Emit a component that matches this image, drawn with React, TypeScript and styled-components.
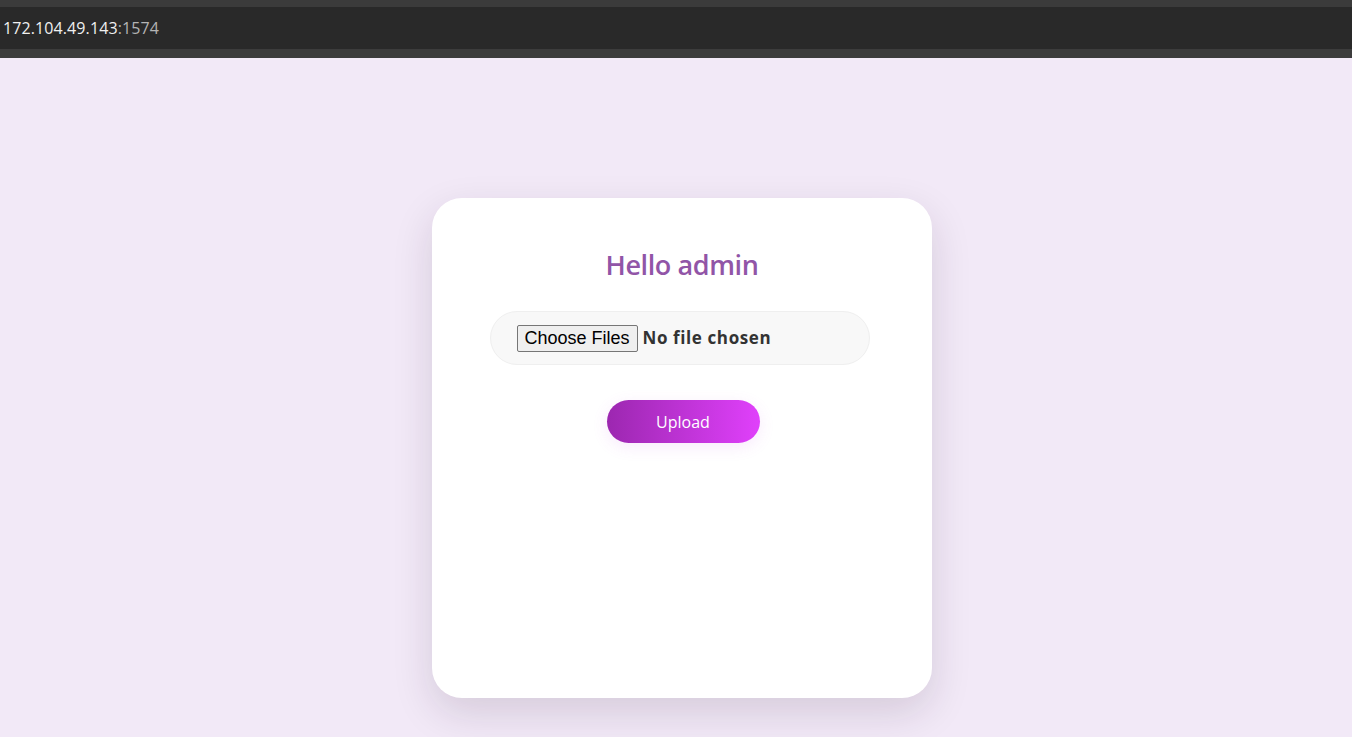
import React from 'react';
import styled, {createGlobalStyle} from 'styled-components';

const GlobalStyle = createGlobalStyle`
  html, body {
    margin: 0;
    padding: 0;
    background: #f2e9f7;
  }
  * {
    box-sizing: border-box;
  }
`;

export default function App() {
    return (
        <PageStyled>
            <GlobalStyle/>
            <AddressBarStyled>
                <AddressHost>172.104.49.143</AddressHost>
                <AddressPort>:1574</AddressPort>
            </AddressBarStyled>
            <MainStyled>
                <CardStyled>
                    <TitleStyled>Hello admin</TitleStyled>
                    <FileBoxStyled>
                        <FileInputStyled type="file" multiple/>
                    </FileBoxStyled>
                    <UploadButton type="button">Upload</UploadButton>
                </CardStyled>
            </MainStyled>
        </PageStyled>
    );
}

const PageStyled = styled.div`
  display: flex;
  flex-direction: column;
  min-height: 100vh;
  background: #f2e9f7;
`;

const AddressBarStyled = styled.div`
  display: flex;
  align-items: center;
  height: 58px;
  padding-left: 3px;
  background: #292929;
  border-top: 7px solid #3b3b3b;
  border-bottom: 9px solid #3c3c3c;
  font-family: "Open Sans", "Liberation Sans", sans-serif;
  font-size: 16px;
  letter-spacing: 0.1px;
`;

const AddressHost = styled.span`
  color: #f0f0f0;
`;

const AddressPort = styled.span`
  color: #b4b4b4;
`;

const MainStyled = styled.main`
  flex: 1;
  display: flex;
  justify-content: center;
  padding: 140px 0 39px 12px;
`;

const CardStyled = styled.div`
  display: flex;
  flex-direction: column;
  align-items: center;
  width: 500px;
  height: 500px;
  padding-top: 48px;
  background: #ffffff;
  border-radius: 30px;
  box-shadow: 0 15px 40px rgba(40, 20, 50, 0.14);
`;

const TitleStyled = styled.h2`
  margin: 0 0 27px;
  color: #9155a7;
  font-family: "Open Sans", "Noto Sans", sans-serif;
  font-size: 27px;
  font-weight: 600;
  line-height: 38px;
  letter-spacing: -0.4px;
`;

const FileBoxStyled = styled.div`
  display: flex;
  align-items: center;
  width: 380px;
  height: 54px;
  margin-right: 5px;
  padding: 0 26px;
  background: #f8f8f8;
  border: 1px solid #efefef;
  border-radius: 27px;
`;

const FileInputStyled = styled.input`
  color: #333333;
  font-family: "Open Sans", "Noto Sans", sans-serif;
  font-size: 17px;
  font-weight: 700;
  letter-spacing: 0.6px;

  &::file-selector-button {
    height: 27px;
    margin-right: 5px;
    padding: 0 7px;
    background: #efefef;
    color: #000000;
    border: 1px solid #767676;
    border-radius: 2px;
    font-family: "Liberation Sans", Arial, sans-serif;
    font-size: 18px;
    font-weight: 400;
    letter-spacing: 0;
  }
`;

const UploadButton = styled.button`
  width: 153px;
  height: 43px;
  margin: 35px 0 0 2px;
  background: linear-gradient(90deg, #9c27b0, #e040fb);
  color: #ffffff;
  border: none;
  border-radius: 22px;
  font-family: "Open Sans", "Noto Sans", sans-serif;
  font-size: 16px;
  box-shadow: 0 4px 16px rgba(200, 80, 230, 0.12);
`;
